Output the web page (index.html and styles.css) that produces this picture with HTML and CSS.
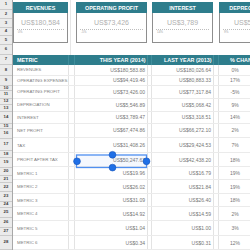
FILE: index.html
```html
<!DOCTYPE html>
<html>
<head>
<meta charset="utf-8">
<link rel="stylesheet" href="styles.css">
</head>
<body>
<div class="page">
  <div class="gutter">
    <div class="g" style="height:10px">1</div>
    <div class="g" style="height:9px">2</div>
    <div class="g" style="height:9px">3</div>
    <div class="g" style="height:8px">4</div>
    <div class="g" style="height:9px">5</div>
    <div class="g" style="height:10px">6</div>
    <div class="g" style="height:10px">7</div>
    <div class="g" style="height:11px">8</div>
    <div class="g" style="height:10px">9</div>
    <div class="g" style="height:5px">10</div>
    <div class="g" style="height:8px">11</div>
    <div class="g" style="height:6px">12</div>
    <div class="g" style="height:7px">13</div>
    <div class="g" style="height:12px">14</div>
    <div class="g" style="height:5px">15</div>
    <div class="g" style="height:10px">16</div>
    <div class="g" style="height:12px">17</div>
    <div class="g" style="height:7px">18</div>
    <div class="g" style="height:10px">19</div>
    <div class="g" style="height:8px">20</div>
    <div class="g" style="height:7px">21</div>
    <div class="g" style="height:9px">22</div>
    <div class="g" style="height:10px">23</div>
    <div class="g" style="height:6px">24</div>
    <div class="g" style="height:10px">25</div>
    <div class="g" style="height:10px">26</div>
    <div class="g" style="height:8px">27</div>
    <div class="g" style="height:14px">28</div>
  </div>
  <div class="sheet">
    <div class="cards">
      <div class="card c-a">
        <div class="card-head">REVENUES</div>
        <div class="card-val">US$180,584</div>
        <div class="card-rule"></div>
        <div class="card-pct">0%</div>
      </div>
      <div class="card c-b">
        <div class="card-head">OPERATING PROFIT</div>
        <div class="card-val">US$73,426</div>
        <div class="card-rule"></div>
        <div class="card-pct">-5%</div>
      </div>
      <div class="card c-c">
        <div class="card-head">INTEREST</div>
        <div class="card-val">US$3,789</div>
        <div class="card-rule"></div>
        <div class="card-pct">14%</div>
      </div>
      <div class="card c-d">
        <div class="card-head">DEPRECIATION</div>
        <div class="card-val">US$5,547</div>
        <div class="card-rule"></div>
        <div class="card-pct">9%</div>
      </div>
    </div>

    <div class="row thead">
      <div class="cell m">METRIC</div><div class="sp"></div>
      <div class="cell num">THIS YEAR (2014)</div><div class="sp"></div>
      <div class="cell num">LAST YEAR (2013)</div><div class="sp"></div>
      <div class="cell pc">% CHANGE</div>
    </div>

    <div class="row" style="height:11px"><div class="cell m">REVENUES</div><div class="sp"></div><div class="cell num">US$180,583.88</div><div class="sp"></div><div class="cell num">US$180,026.64</div><div class="sp"></div><div class="cell pc"><span>0%</span></div></div>
    <div class="row" style="height:10px"><div class="cell m">OPERATING EXPENSES</div><div class="sp"></div><div class="cell num">US$94,419.46</div><div class="sp"></div><div class="cell num">US$80,883.33</div><div class="sp"></div><div class="cell pc"><span>17%</span></div></div>
    <div class="row" style="height:13px"><div class="cell m">OPERATING PROFIT</div><div class="sp"></div><div class="cell num">US$73,426.00</div><div class="sp"></div><div class="cell num">US$77,317.84</div><div class="sp"></div><div class="cell pc"><span>-5%</span></div></div>
    <div class="row" style="height:13px"><div class="cell m">DEPRECIATION</div><div class="sp"></div><div class="cell num">US$5,546.89</div><div class="sp"></div><div class="cell num">US$5,068.42</div><div class="sp"></div><div class="cell pc"><span>9%</span></div></div>
    <div class="row" style="height:12px"><div class="cell m">INTEREST</div><div class="sp"></div><div class="cell num">US$3,789.47</div><div class="sp"></div><div class="cell num">US$3,318.51</div><div class="sp"></div><div class="cell pc"><span>14%</span></div></div>
    <div class="row" style="height:15px"><div class="cell m">NET PROFIT</div><div class="sp"></div><div class="cell num">US$67,474.86</div><div class="sp"></div><div class="cell num">US$66,272.10</div><div class="sp"></div><div class="cell pc"><span>2%</span></div></div>
    <div class="row" style="height:15px"><div class="cell m">TAX</div><div class="sp"></div><div class="cell num">US$31,408.26</div><div class="sp"></div><div class="cell num">US$29,424.53</div><div class="sp"></div><div class="cell pc"><span>7%</span></div></div>
    <div class="row" style="height:14px"><div class="cell m">PROFIT AFTER TAX</div><div class="sp"></div><div class="cell num">US$50,247.63</div><div class="sp"></div><div class="cell num">US$42,438.20</div><div class="sp"></div><div class="cell pc"><span>18%</span></div></div>
    <div class="row" style="height:13px"><div class="cell m">METRIC 1</div><div class="sp"></div><div class="cell num">US$19.96</div><div class="sp"></div><div class="cell num">US$16.79</div><div class="sp"></div><div class="cell pc"><span>19%</span></div></div>
    <div class="row" style="height:14px"><div class="cell m">METRIC 2</div><div class="sp"></div><div class="cell num">US$26.02</div><div class="sp"></div><div class="cell num">US$21.84</div><div class="sp"></div><div class="cell pc"><span>19%</span></div></div>
    <div class="row" style="height:13px"><div class="cell m">METRIC 3</div><div class="sp"></div><div class="cell num">US$31.09</div><div class="sp"></div><div class="cell num">US$26.40</div><div class="sp"></div><div class="cell pc"><span>18%</span></div></div>
    <div class="row" style="height:14px"><div class="cell m">METRIC 4</div><div class="sp"></div><div class="cell num">US$14.92</div><div class="sp"></div><div class="cell num">US$14.59</div><div class="sp"></div><div class="cell pc"><span>2%</span></div></div>
    <div class="row" style="height:15px"><div class="cell m">METRIC 5</div><div class="sp"></div><div class="cell num">US$1.04</div><div class="sp"></div><div class="cell num">US$1.00</div><div class="sp"></div><div class="cell pc"><span>3%</span></div></div>
    <div class="row" style="height:14px"><div class="cell m">METRIC 6</div><div class="sp"></div><div class="cell num">US$0.34</div><div class="sp"></div><div class="cell num">US$0.31</div><div class="sp"></div><div class="cell pc"><span>12%</span></div></div>

    <svg class="selection" width="237" height="250" viewBox="0 0 237 250">
      <rect x="63.5" y="155" width="70" height="12.5" fill="rgba(80,140,240,0.06)" stroke="#4f8ff0" stroke-width="1.3"/>
      <circle cx="64" cy="161.3" r="3.4" fill="#1f6fe6" stroke="#1453b8" stroke-width="0.6"/>
      <circle cx="99.5" cy="154.8" r="3.4" fill="#1f6fe6" stroke="#1453b8" stroke-width="0.6"/>
      <circle cx="99.5" cy="167.6" r="3.4" fill="#1f6fe6" stroke="#1453b8" stroke-width="0.6"/>
      <circle cx="133.5" cy="161.3" r="3.4" fill="#1f6fe6" stroke="#1453b8" stroke-width="0.6"/>
    </svg>
  </div>
</div>
</body>
</html>
```

FILE: styles.css
```css
* { box-sizing: border-box; }
html, body { margin: 0; padding: 0; background: #fff; }
body {
  width: 250px;
  height: 250px;
  overflow: hidden;
  font-family: "Liberation Sans", Arial, sans-serif;
}
.page {
  display: flex;
  width: 250px;
  height: 250px;
  overflow: hidden;
}
.gutter {
  flex: 0 0 13px;
  display: flex;
  flex-direction: column;
  background: #ebebeb;
  border-right: 1px solid #a8a8a8;
}
.g {
  flex: none;
  display: flex;
  align-items: center;
  justify-content: center;
  border-bottom: 1px solid #cbcbcb;
  font-size: 4.3px;
  font-weight: bold;
  color: #3a3a3a;
  line-height: 1;
  overflow: visible;
}
.sheet {
  position: relative;
  flex: 0 0 267px;
  display: flex;
  flex-direction: column;
}
.cards {
  height: 55px;
  display: grid;
  grid-template-columns: 55px 7px 72px 5px 61px 6px 61px;
  padding-top: 2px;
  align-items: start;
  background: linear-gradient(to right, transparent 57px, #e6e6e6 57px, #e6e6e6 58px, transparent 58px);
}
.c-a { grid-column: 1; }
.c-b { grid-column: 3; margin-left: 1px; }
.c-c { grid-column: 5; }
.c-d { grid-column: 7; }
.card {
  height: 41px;
  border: 1px solid #8e8e8e;
  border-top: none;
  background: #fff;
  display: flex;
  flex-direction: column;
}
.card-head {
  height: 11px;
  background: #2e7d8c;
  color: #fff;
  font-weight: bold;
  font-size: 5.4px;
  display: flex;
  align-items: center;
  justify-content: center;
  white-space: nowrap;
  margin: 0 -1px;
}
.card-val {
  margin-top: 6px;
  height: 8px;
  line-height: 8px;
  font-size: 7px;
  color: #b0b0b0;
  text-align: center;
  white-space: nowrap;
}
.card-rule {
  margin: 2px 3px 0;
  border-top: 1px dotted #bdbdbd;
}
.card-pct {
  margin: 1px 0 0 4px;
  font-size: 3px;
  line-height: 3px;
  color: #a0a0a0;
}
.row {
  display: grid;
  grid-template-columns: 55px 7px 72px 5px 61px 6px 61px;
  border-bottom: 1px solid #ebebeb;
  font-size: 4.4px;
  color: #7c7c7c;
}
.cell {
  display: flex;
  align-items: center;
  white-space: nowrap;
  overflow: hidden;
}
.sp {
  border-left: 1px solid #e3e3e3;
  border-right: 1px solid #e3e3e3;
}
.m { padding-left: 4px; }
.num {
  justify-content: flex-end;
  padding-right: 2px;
  font-size: 5px;
  color: #767676;
}
.pc {
  font-size: 5px;
  color: #767676;
}
.pc span {
  display: inline-block;
  width: 20px;
  margin-left: 6px;
  text-align: center;
}
.thead {
  height: 10px;
  background: #2e7d8c;
  color: #fff;
  font-weight: bold;
  font-size: 5.4px;
  border-bottom: none;
}
.thead .num { color: #fff; font-size: 5.4px; padding-right: 1.5px; }
.thead .pc { color: #fff; font-size: 5.4px; padding-left: 11px; }
.thead .sp { border-left: 1px solid #3f8e9c; border-right: 1px solid #3f8e9c; }
.selection {
  position: absolute;
  left: 0;
  top: 0;
  pointer-events: none;
}
```
